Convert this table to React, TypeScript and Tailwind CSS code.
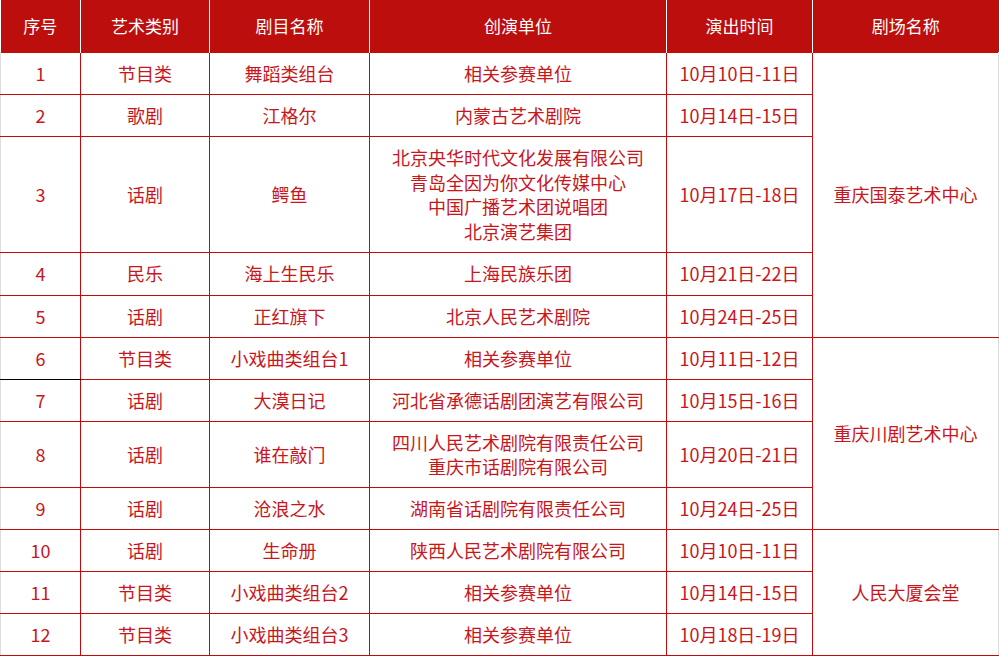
const rows = [
  { no: "1", type: "节目类", name: "舞蹈类组台", units: ["相关参赛单位"], date: "10月10日-11日", h: "h-[42px]" },
  { no: "2", type: "歌剧", name: "江格尔", units: ["内蒙古艺术剧院"], date: "10月14日-15日", h: "h-[42px]" },
  {
    no: "3",
    type: "话剧",
    name: "鳄鱼",
    units: ["北京央华时代文化发展有限公司", "青岛全因为你文化传媒中心", "中国广播艺术团说唱团", "北京演艺集团"],
    date: "10月17日-18日",
    h: "h-[116px]",
  },
  { no: "4", type: "民乐", name: "海上生民乐", units: ["上海民族乐团"], date: "10月21日-22日", h: "h-[43px]" },
  { no: "5", type: "话剧", name: "正红旗下", units: ["北京人民艺术剧院"], date: "10月24日-25日", h: "h-[42px]" },
  { no: "6", type: "节目类", name: "小戏曲类组台1", units: ["相关参赛单位"], date: "10月11日-12日", h: "h-[42px]" },
  { no: "7", type: "话剧", name: "大漠日记", units: ["河北省承德话剧团演艺有限公司"], date: "10月15日-16日", h: "h-[42px]" },
  {
    no: "8",
    type: "话剧",
    name: "谁在敲门",
    units: ["四川人民艺术剧院有限责任公司", "重庆市话剧院有限公司"],
    date: "10月20日-21日",
    h: "h-[66px]",
  },
  { no: "9", type: "话剧", name: "沧浪之水", units: ["湖南省话剧院有限责任公司"], date: "10月24日-25日", h: "h-[42px]" },
  { no: "10", type: "话剧", name: "生命册", units: ["陕西人民艺术剧院有限公司"], date: "10月10日-11日", h: "h-[42px]" },
  { no: "11", type: "节目类", name: "小戏曲类组台2", units: ["相关参赛单位"], date: "10月14日-15日", h: "h-[42px]" },
  { no: "12", type: "节目类", name: "小戏曲类组台3", units: ["相关参赛单位"], date: "10月18日-19日", h: "h-[42px]" },
];

// theatre cell sits on the first row of each group
const venues: Record<number, { name: string; span: number }> = {
  0: { name: "重庆国泰艺术中心", span: 5 },
  5: { name: "重庆川剧艺术中心", span: 4 },
  9: { name: "人民大厦会堂", span: 3 },
};

const heads = ["序号", "艺术类别", "剧目名称", "创演单位", "演出时间", "剧场名称"];

const td = "border border-[#c40a0a] text-center align-middle px-1 py-0 leading-[24.5px]";

export default function App() {
  return (
    <div className="w-[999px] h-[657px] bg-white overflow-hidden" style={{ fontFamily: '"Noto Sans CJK SC", "Noto Sans", sans-serif' }}>
      <table className="table-fixed border-collapse w-[998px] text-[18px] text-[#c8161d]">
        <colgroup>
          <col className="w-[80px]" />
          <col className="w-[129px]" />
          <col className="w-[160px]" />
          <col className="w-[297px]" />
          <col className="w-[146px]" />
          <col className="w-[186px]" />
        </colgroup>
        <thead>
          <tr className="h-[52px] bg-[#bd0e0e] text-white">
            {heads.map((h, i) => (
              <th
                key={h}
                className={
                  "font-normal text-center align-middle border-white text-[17px] " +
                  (i < heads.length - 1 ? "border-r" : "")
                }
              >
                {h}
              </th>
            ))}
          </tr>
        </thead>
        <tbody>
          {rows.map((r, i) => (
            <tr key={r.no} className={r.h}>
              <td
                className={
                  td +
                  " border-l-[#dddddd] " +
                  (i === 5 ? "border-b-black" : "")
                }
              >
                {r.no}
              </td>
              <td className={td}>{r.type}</td>
              <td className={td}>{r.name}</td>
              <td className={td}>
                {r.units.map((u) => (
                  <div key={u}>{u}</div>
                ))}
              </td>
              <td className={td}>{r.date}</td>
              {venues[i] && (
                <td rowSpan={venues[i].span} className={td + " border-r-[#dddddd]"}>
                  {venues[i].name}
                </td>
              )}
            </tr>
          ))}
        </tbody>
      </table>
    </div>
  );
}
